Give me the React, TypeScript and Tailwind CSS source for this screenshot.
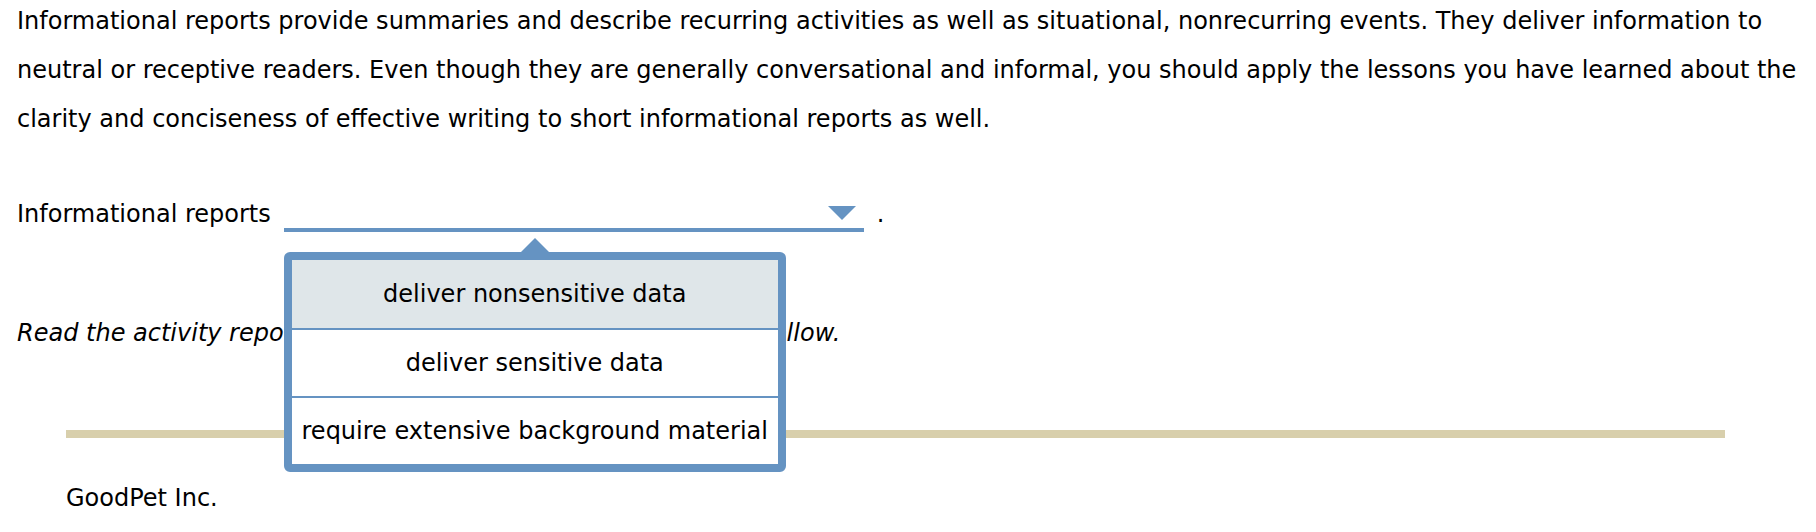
export default function App() {
  const options = [
    { label: "deliver nonsensitive data", active: true },
    { label: "deliver sensitive data", active: false },
    { label: "require extensive background material", active: false },
  ];

  return (
    <div className="min-h-[532px] w-[1816px] overflow-hidden bg-white pl-[17px] pr-2 font-['DejaVu_Sans',Verdana,sans-serif] text-[24px] text-black">
      <p className="-mt-[3px] leading-[49px]">
        Informational reports provide summaries and describe recurring activities as well as situational, nonrecurring
        events. They deliver information to neutral or receptive readers. Even though they are generally conversational
        and informal, you should apply the lessons you have learned about the clarity and conciseness of effective
        writing to short informational reports as well.
      </p>

      <div className="mt-[48px] flex items-end">
        <span className="mb-[3px] leading-[30px]">Informational reports</span>
        <div className="relative ml-[13px] h-[40px] w-[580px] border-b-4 border-[#6593c2]">
          <svg
            className="absolute right-[8px] top-[14px]"
            width="28"
            height="14"
            viewBox="0 0 28 14"
          >
            <polygon points="0,0 28,0 14,14" fill="#6593c2" />
          </svg>

          <div className="absolute left-0 top-[60px] z-10 w-[502px]">
            <svg
              className="absolute left-1/2 top-[-14px] -translate-x-1/2"
              width="28"
              height="14"
              viewBox="0 0 28 14"
            >
              <polygon points="0,14 14,0 28,14" fill="#6593c2" />
            </svg>
            <div className="overflow-hidden rounded-[6px] border-8 border-[#6593c2] bg-white">
              {options.map((o, i) => (
                <div
                  key={o.label}
                  className={
                    (i > 0 ? "border-t-2 border-[#6593c2] " : "") +
                    (o.active ? "bg-[#dfe6e9] " : "bg-white ") +
                    "flex h-[68px] items-center justify-center px-2 leading-[30px]"
                  }
                >
                  {o.label}
                </div>
              ))}
            </div>
          </div>
        </div>
        <span className="mb-[3px] ml-[13px] leading-[30px]">.</span>
      </div>

      <p className="mt-[77px] italic leading-[49px]">
        Read the activity report below and answer the questions that follow.
      </p>

      <div className="ml-[49px] mt-[72px] h-[8px] w-[1659px] bg-[#d8cfac]" />

      <p className="ml-[49px] mt-[36px] leading-[49px]">GoodPet Inc.</p>
    </div>
  );
}
